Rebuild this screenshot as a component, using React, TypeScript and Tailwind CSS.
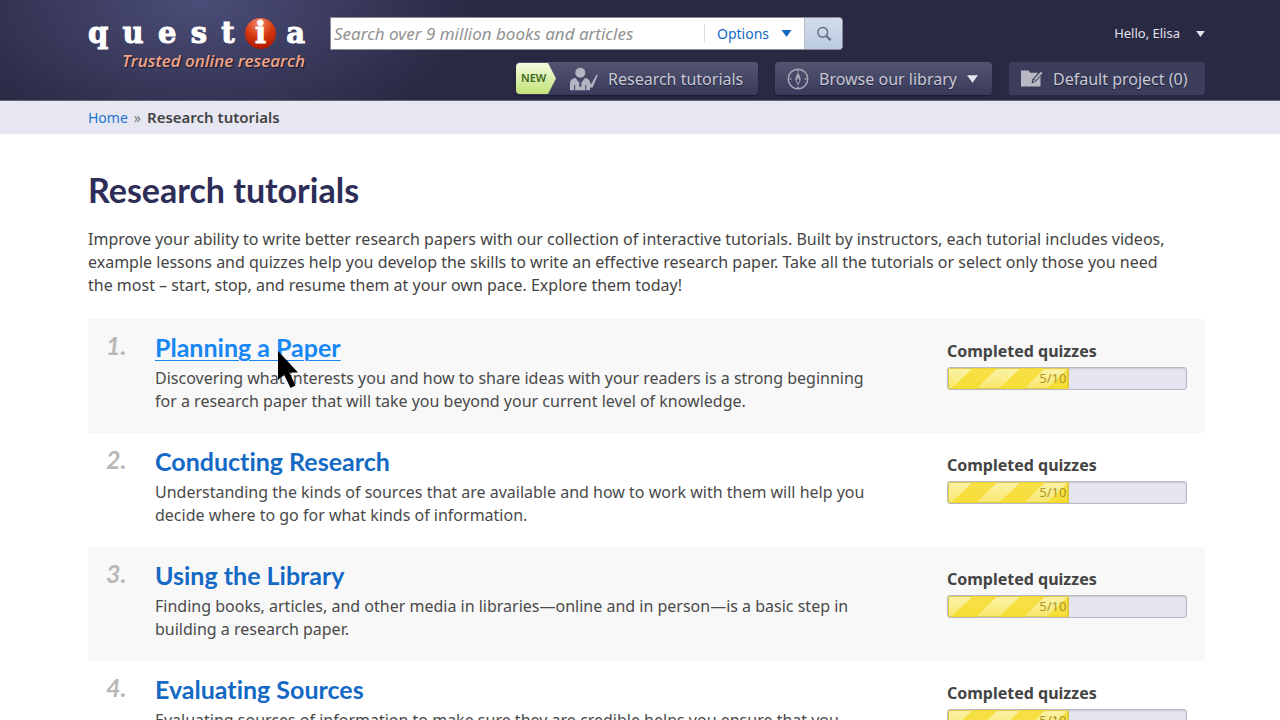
import React from "react";

type Tutorial = {
  title: string;
  summary: string;
  done: number;
  total: number;
  hovered?: boolean;
};

const tutorials: Tutorial[] = [
  {
    title: "Planning a Paper",
    summary:
      "Discovering what interests you and how to share ideas with your readers is a strong beginning for a research paper that will take you beyond your current level of knowledge.",
    done: 5,
    total: 10,
    hovered: true,
  },
  {
    title: "Conducting Research",
    summary:
      "Understanding the kinds of sources that are available and how to work with them will help you decide where to go for what kinds of information.",
    done: 5,
    total: 10,
  },
  {
    title: "Using the Library",
    summary:
      "Finding books, articles, and other media in libraries—online and in person—is a basic step in building a research paper.",
    done: 5,
    total: 10,
  },
  {
    title: "Evaluating Sources",
    summary:
      "Evaluating sources of information to make sure they are credible helps you ensure that you",
    done: 5,
    total: 10,
  },
];

function Caret({ className }: { className: string }) {
  return (
    <svg viewBox="0 0 10 7" className={className} fill="currentColor" aria-hidden="true">
      <path d="M0 0h10L5 7z" />
    </svg>
  );
}

function Logo() {
  return (
    <a href="#home" aria-label="Questia" className="block w-[217px] pt-[17px]">
      <span className="flex items-center justify-between font-['DejaVu_Serif',serif] text-[29px] leading-8 font-bold text-white [-webkit-text-stroke:1px_white]">
        <span>q</span>
        <span>u</span>
        <span>e</span>
        <span>s</span>
        <span>t</span>
        <span className="-mx-1 flex size-[31px] items-center justify-center rounded-full bg-[radial-gradient(circle_at_45%_15%,#f08a68,#d83a12_45%,#b01c04_80%)]">
          i
        </span>
        <span>a</span>
      </span>
      <span className="block text-right font-['Open_Sans',sans-serif] text-[17px] leading-6 font-semibold text-[#f0a488] italic [text-shadow:1px_1px_1px_#15152a]">
        Trusted online research
      </span>
    </a>
  );
}

function SearchForm() {
  return (
    <form className="flex h-[33px] w-[513px] rounded-r-sm border border-[#8c8c96] bg-white" onSubmit={(e) => e.preventDefault()}>
      <input
        type="search"
        aria-label="Search"
        placeholder="Search over 9 million books and articles"
        className="min-w-0 flex-1 px-[3px] text-[17px] text-[#444] italic outline-none placeholder:text-[#929292]"
      />
      <button type="button" className="my-1.5 flex items-center gap-3 border-l border-[#dcdce4] px-3 text-sm text-[#1469c4]">
        Options
        <Caret className="h-[7px] w-[11px]" />
      </button>
      <button
        type="submit"
        aria-label="Submit search"
        className="flex w-[38px] items-center justify-center rounded-r-sm border-l border-[#b4bccb] bg-linear-to-b from-[#d3dcec] to-[#bccbe2] text-[#666c80]"
      >
        <svg viewBox="0 0 16 16" className="size-4" fill="none" stroke="currentColor" aria-hidden="true">
          <circle cx="6.7" cy="6.3" r="4.9" strokeWidth="1.5" />
          <path d="M10.4 10l4.2 4.2" strokeWidth="2.2" />
        </svg>
      </button>
    </form>
  );
}

function TutorIcon() {
  return (
    <svg viewBox="0 0 28 24" className="h-6 w-7 text-[#b4b5c2]" fill="currentColor" aria-hidden="true">
      <circle cx="10.3" cy="5.8" r="5" />
      <path d="M0 23.3V16.500Q0 11.500 5.500 11L10.300 17 15 11Q18 11.200 19.500 13.500L21 17.500 26.700 7.500 27.800 8.200 22.500 20.500H20V23.300z" />
      <path d="M4.700 18v5.500M15.800 18v5.500" stroke="#494a67" strokeWidth="1" />
      <path d="M10.300 12l-1.200 1 .7 1-.9 4.500 1.400 2 1.400-2-.9-4.500.7-1z" fill="#50516c" />
    </svg>
  );
}

function CompassIcon() {
  return (
    <svg viewBox="0 0 22 22" className="size-[22px] text-[#a8a9b9]" fill="none" stroke="currentColor" aria-hidden="true">
      <circle cx="11" cy="11" r="9.8" strokeWidth="1.4" />
      <path d="M11 1.500v2M11 18.500v2M2.500 11h1.800M17.700 11h1.800" strokeWidth="1.3" />
      <path d="M11 4l2.800 7h-5.600z" fill="currentColor" stroke="none" />
      <path d="M8.700 11.500l2.300 5.500 2.300-5.500z" strokeWidth="0.9" />
      <circle cx="11" cy="11" r="1" fill="#50516c" stroke="none" />
    </svg>
  );
}

function ProjectIcon() {
  return (
    <svg viewBox="0 0 22 17" className="h-[17px] w-[22px]" aria-hidden="true">
      <path d="M0 .5h7.500l1.800 2.200H19.500V16.500H0z" fill="#b8b9c4" />
      <path d="M10.500 13.500l.8-4L18.200 1.500l3.600 2.600-7.400 8z" fill="#3f405a" />
      <path d="M14 9.500l6.700-7" stroke="#b8b9c4" strokeWidth="2" />
      <path d="M12 12.200l.8-3 2 1.800z" fill="#b8b9c4" />
    </svg>
  );
}

const navButton =
  "flex h-[33px] items-center rounded-sm text-base text-[#c9cad5] [text-shadow:0_1px_1px_#20203a]";
const raised = "bg-linear-to-b from-[#53546f] to-[#3a3b5c] shadow-[0_1px_1px_#1c1c30]";

function Header() {
  return (
    <header className="flex h-[101px] border-b border-[#66667a] bg-[#292943] bg-[radial-gradient(ellipse_280px_150px_at_200px_0px,#4c4d78,#292943)] pr-[75px] pl-[88px]">
      <div className="w-[242px] shrink-0">
        <Logo />
      </div>
      <div className="flex flex-1 flex-col gap-3 pt-[17px]">
        <div className="flex items-center justify-between">
          <SearchForm />
          <button type="button" className="flex items-center gap-4 text-[13px] text-[#e2e2ea]">
            Hello, Elisa
            <Caret className="h-[6px] w-[9px]" />
          </button>
        </div>
        <nav className="flex justify-end gap-[17px]">
          <a href="#tutorials" className={`${navButton} ${raised} w-[242px]`}>
            <span className="flex h-[31px] w-10 items-center rounded-l-sm bg-linear-to-b from-[#f4fbe0] to-[#c2e276] pl-[5px] text-[11px] font-semibold text-[#3e6a1c] [clip-path:polygon(0_0,80%_0,100%_50%,80%_100%,0_100%)] [text-shadow:none]">
              NEW
            </span>
            <span className="mr-2.5 ml-3.5">
              <TutorIcon />
            </span>
            Research tutorials
          </a>
          <button type="button" className={`${navButton} ${raised} w-[217px] gap-2.5 pl-3`}>
            <CompassIcon />
            Browse our library
            <Caret className="h-[8px] w-[11px] text-[#e6e6ee]" />
          </button>
          <a href="#project" className={`${navButton} w-[196px] gap-2.5 bg-[#3c3d5b] pl-3`}>
            <ProjectIcon />
            Default project (0)
          </a>
        </nav>
      </div>
    </header>
  );
}

function QuizProgress({ id, done, total }: { id: string; done: number; total: number }) {
  return (
    <div className="w-60 shrink-0 pt-5">
      <div id={id} className="text-base leading-6 font-bold text-[#444]">
        Completed quizzes
      </div>
      <div
        role="progressbar"
        aria-labelledby={id}
        aria-valuenow={done}
        aria-valuemin={0}
        aria-valuemax={total}
        className="mt-1 h-[23px] overflow-hidden rounded-[3px] border border-[#b9b9c4] bg-[#e6e6f2] shadow-[inset_0_1px_2px_#c8c8d6]"
      >
        <div
          className="relative h-full border-r border-[#d9c04a] bg-linear-to-b from-[#fbf3a8] to-[#f9e768] text-right text-[13px] leading-[20px] text-[#a8962c] shadow-[inset_0_0_1px_1px_#e0c84a]"
          style={{ width: `${(done / total) * 100 + 1}%` }}
        >
          <svg className="absolute inset-0 size-full" viewBox="0 0 121 21" preserveAspectRatio="none" aria-hidden="true">
            <path d="M3 21L25 0H50L28 21zM51 21L73 0H98L76 21zM99 21L121 0V21z" fill="#f5d820" fillOpacity="0.7" />
          </svg>
          <span className="relative pr-0.5">
            {done}/{total}
          </span>
        </div>
      </div>
    </div>
  );
}

function Pointer() {
  return (
    <svg viewBox="0 0 22 38" className="pointer-events-none absolute top-5 left-[122px] z-10 h-[38px] w-[22px]" aria-hidden="true">
      <path d="M1 0v29l6-5.500 6.500 13.500 5-2.500-6.200-13H21z" fill="#000" />
    </svg>
  );
}

function TutorialRow({ item, index }: { item: Tutorial; index: number }) {
  return (
    <li className="flex h-[114px] pr-[18px] odd:bg-[#f8f8f8]">
      <div className="w-[67px] shrink-0 pt-2.5 pl-[18px] font-['Lato',sans-serif] text-[25px] leading-8 font-bold text-[#b8b8b8] italic">
        {index + 1}.
      </div>
      <div className="flex-1 pt-3">
        <h2 className="relative font-['Lato',sans-serif] text-[25px] leading-8 font-bold [font-variant-ligatures:none]">
          <a
            href={`#tutorial-${index + 1}`}
            className={item.hovered ? "text-[#1787f5] underline decoration-1 underline-offset-3" : "text-[#1469c4]"}
          >
            {item.title}
          </a>
          {item.hovered && <Pointer />}
        </h2>
        <p className="mt-1 max-w-[730px] text-base leading-[23px] text-[#4a4a4a]">{item.summary}</p>
      </div>
      <QuizProgress id={`quizzes-${index + 1}`} done={item.done} total={item.total} />
    </li>
  );
}

export default function App() {
  return (
    <div className="h-screen overflow-hidden bg-white font-['Noto_Sans',sans-serif]">
      <Header />
      <nav aria-label="Breadcrumb" className="h-[33px] bg-[#e7e7f3] pl-[88px] text-sm leading-8 text-[#444]">
        <a href="#home" className="text-[#1b74cc]">
          Home
        </a>
        <span className="px-1.5 text-[#777]">»</span>
        <span className="text-[15px] font-semibold">Research tutorials</span>
      </nav>
      <main className="pt-8 pr-[75px] pl-[88px]">
        <h1 className="font-['Lato',sans-serif] text-[34px] leading-[48px] font-bold text-[#2d2d58]">Research tutorials</h1>
        <p className="mt-3.5 pr-6 text-base leading-[23px] text-[#444]">
          Improve your ability to write better research papers with our collection of interactive tutorials. Built by
          instructors, each tutorial includes videos, example lessons and quizzes help you develop the skills to write an
          effective research paper. Take all the tutorials or select only those you need the most – start, stop, and
          resume them at your own pace. Explore them today!
        </p>
        <ol className="mt-[22px]">
          {tutorials.map((item, index) => (
            <TutorialRow key={item.title} item={item} index={index} />
          ))}
        </ol>
      </main>
    </div>
  );
}
